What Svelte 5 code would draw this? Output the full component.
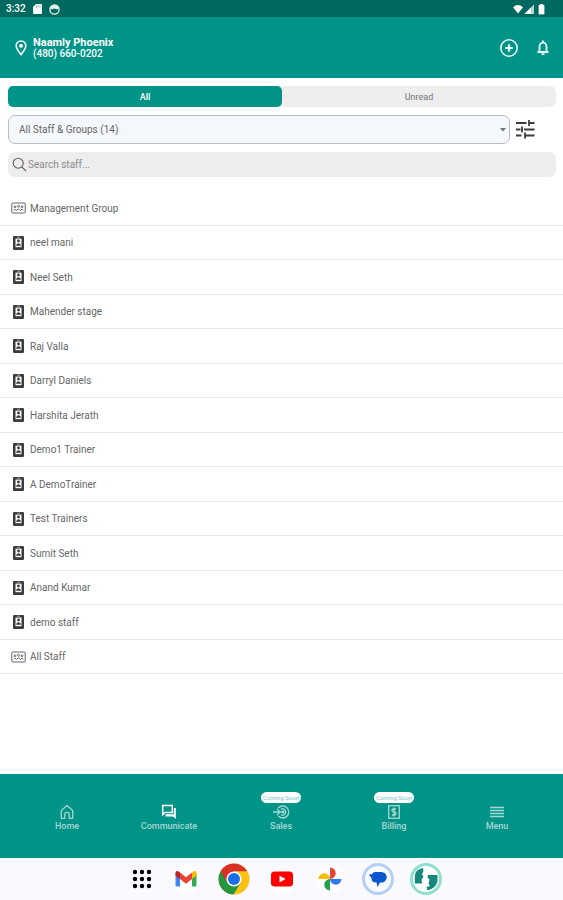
<script>
  const rows = [
    { name: 'Management Group', group: true },
    { name: 'neel mani' },
    { name: 'Neel Seth' },
    { name: 'Mahender stage' },
    { name: 'Raj Valla' },
    { name: 'Darryl Daniels' },
    { name: 'Harshita Jerath' },
    { name: 'Demo1 Trainer' },
    { name: 'A DemoTrainer' },
    { name: 'Test Trainers' },
    { name: 'Sumit Seth' },
    { name: 'Anand Kumar' },
    { name: 'demo staff' },
    { name: 'All Staff', group: true }
  ];
  const nav = [
    { label: 'Home', icon: 'home' },
    { label: 'Communicate', icon: 'chat', active: true },
    { label: 'Sales', icon: 'sales', soon: true },
    { label: 'Billing', icon: 'billing', soon: true },
    { label: 'Menu', icon: 'menu' }
  ];
  let tab = $state('all');
  let query = $state('');
  let shown = $derived(rows.filter((r) => r.name.toLowerCase().includes(query.toLowerCase())));
</script>

<div class="app">
  <div class="status">
    <span class="time">3:32</span>
    <svg width="9" height="10" viewBox="0 0 9 10"><path d="M3 0H8Q9 0 9 1V9Q9 10 8 10H1Q0 10 0 9V3Z" fill="#fff" /><path d="M3.5 1.5v2M5.3 1.5v2M7.1 1.5v2" stroke="#4d938c" stroke-width=".7" /></svg>
    <svg width="11" height="11" viewBox="0 0 11 11"><circle cx="5.5" cy="5.5" r="4.600" fill="none" stroke="#e8f4f2" stroke-width="1.300" /><path d="M1 4.800Q1.500 1 5.500 1T10 4.800L7.800 5.500 6.800 4.800H4.200L3.200 5.500Z" fill="#e8f4f2" /></svg>
    <svg class="right" width="34" height="11" viewBox="0 0 34 11"><path d="M1 3.200Q6 -1 11 3.200L6 9.500Z" fill="#fff" /><path d="M22 .5V10H12.500Z" fill="#b5d3d0" /><path d="M19 3.500V10H12.500Z" fill="#fff" /><path d="M27 1.300h1.500V.3h2v1H32V10H27Z" fill="#fff" stroke="#fff" stroke-width=".8" stroke-linejoin="round" /></svg>
  </div>

  <header>
    <svg width="12" height="16" viewBox="0 0 12 16" fill="none" stroke="#fff"><path d="M6 14.600C3.600 11.600 1.200 8.800 1.200 5.800a4.800 4.800 0 0 1 9.600 0c0 3-2.400 5.800-4.800 8.800Z" stroke-width="1.600" /><circle cx="6" cy="5.800" r="1.500" fill="#fff" stroke-width="1" /></svg>
    <div class="place">
      <strong>Naamly Phoenix</strong>
      <span>(480) 660-0202</span>
    </div>
    <button class="plain" aria-label="Add">
      <svg width="20" height="20" viewBox="0 0 20 20" fill="none" stroke="#e9f7f5"><circle cx="10" cy="10" r="8.200" stroke-width="1.600" /><path d="M10 6.200v7.600M6.200 10h7.600" stroke-width="2.200" /></svg>
    </button>
    <button class="plain" aria-label="Notifications">
      <svg width="12" height="15" viewBox="0 0 12 15" fill="none" stroke="#e9f7f5"><path d="M.5 12h11M2.500 12V6.500a3.500 3.900 0 0 1 7 0V12" stroke-width="1.800" /><path d="M6 .5v2M4.500 14.200h3" stroke-width="1.700" /></svg>
    </button>
  </header>

  <main>
    <div class="tabs" role="tablist">
      <button role="tab" aria-selected={tab === 'all'} class:on={tab === 'all'} onclick={() => (tab = 'all')}>All</button>
      <button role="tab" aria-selected={tab === 'unread'} class:on={tab === 'unread'} onclick={() => (tab = 'unread')}>Unread</button>
    </div>
    <div class="filter">
      <div class="pick">
        <select aria-label="Staff and groups"><option>All Staff &amp; Groups (14)</option></select>
        <svg width="6" height="4" viewBox="0 0 6 4"><path d="M0 0h6L3 3.500Z" fill="#6d7276" /></svg>
      </div>
      <button class="plain" aria-label="Filters">
        <svg width="20" height="20" viewBox="0 0 20 20" stroke="#3c3c3c" stroke-width="1.800" fill="none"><path d="M1 3h10.500M14 3h5.500M14 0v6M1 9.500h4.500M9 9.500H19.500M7 6.500v6M1 15.500h5.500M10 15.500h9.500M10 12.500v6" /></svg>
      </button>
    </div>
    <label class="search">
      <svg width="15" height="15" viewBox="0 0 15 15" fill="none" stroke="#5e5e5e" stroke-width="1.100"><circle cx="6.200" cy="6.200" r="5" /><path d="M9.800 9.800L14 14" /></svg>
      <input type="text" placeholder="Search staff..." aria-label="Search staff" bind:value={query} />
    </label>
  </main>

  <ul>
    {#each shown as row}
      <li>
        {#if row.group}
          <svg width="15" height="12" viewBox="0 0 15 12" fill="none" stroke="#666"><rect x=".8" y="1" width="13.400" height="10" rx="1" stroke-width="1" /><circle cx="4" cy="4.800" r=".9" /><circle cx="7.500" cy="4.300" r="1" /><circle cx="11" cy="4.800" r=".9" /><path d="M2.500 8.300q1.500-2.300 3 0q2-3 4 0q1.500-2.300 3 0" stroke-width=".9" /></svg>
        {:else}
          <svg width="15" height="14" viewBox="0 0 15 14"><rect x="2" y="0" width="11" height="14" rx="1.200" fill="#3b3b3b" /><rect x="4.500" y="2.600" width="6" height="8.600" fill="#fff" /><path d="M6 1.200h3" stroke="#bbb" stroke-width=".8" /><circle cx="7.500" cy="5" r="1.400" fill="#3b3b3b" /><path d="M5 9.800Q5.200 7.200 7.500 7.200T10 9.800Z" fill="#3b3b3b" /></svg>
        {/if}
        <span>{row.name}</span>
      </li>
    {/each}
  </ul>

  <nav>
    {#each nav as item}
      <a href="#{item.icon}" class:active={item.active}>
        {#if item.soon}<span class="soon">Coming Soon</span>{/if}
        {#if item.icon === 'home'}
          <svg width="16" height="16" viewBox="0 0 16 16" fill="none" stroke="currentColor" stroke-width="1.300"><path d="M2.300 6.500L8 1.500l5.700 5V14.300H10.200V10Q10.200 8.300 8 8.300T5.800 10v4.300H2.300Z" stroke-linejoin="round" /></svg>
        {:else if item.icon === 'chat'}
          <svg width="16" height="16" viewBox="0 0 16 16" fill="none" stroke="currentColor" stroke-width="1.500"><path d="M1.700 1.500h9.600v7H4L1.700 10.700Z" /><path d="M12.800 4h2v11L12.200 12.500H4.500v-2.200H12.800Z" fill="currentColor" stroke="none" /></svg>
        {:else if item.icon === 'sales'}
          <svg width="18" height="16" viewBox="0 0 18 16" fill="none" stroke="currentColor" stroke-width="1.300"><path d="M6.300 4A6 6 0 1 1 6.300 12" /><path d="M9 5.200A3.200 3.200 0 1 1 9 10.800" /><path d="M1 8h10M5 5l3 3-3 3" /><circle cx="11.200" cy="8" r=".8" fill="currentColor" /></svg>
        {:else if item.icon === 'billing'}
          <svg width="16" height="16" viewBox="0 0 16 16" fill="none" stroke="currentColor" stroke-width="1.300"><rect x="2.700" y="1.700" width="10.600" height="12.600" /><path d="M10 5H7.500Q6 5 6 6.400T7.500 7.800h1Q10 7.800 10 9.400T8.500 11H6M8 3.500V12.500" /></svg>
        {:else}
          <svg width="16" height="16" viewBox="0 0 16 16" stroke="currentColor" stroke-width="1.400"><path d="M1 3.500h14M1 6.500h14M1 9.500h14M1 12.500h14" /></svg>
        {/if}
        <span>{item.label}</span>
      </a>
    {/each}
  </nav>

  <footer>
    <button class="plain apps" aria-label="All apps">
      <svg width="20" height="20" viewBox="0 0 20 20">
        {#each [3, 10, 17] as y}{#each [3, 10, 17] as x}<circle cx={x} cy={y} r="2.200" />{/each}{/each}
      </svg>
    </button>
    <button class="plain" aria-label="Gmail">
      <svg width="32" height="32" viewBox="0 0 32 32"><circle cx="16" cy="16" r="14" fill="#fff" /><path d="M5.500 10v12.300q0 1.200 1.300 1.200H10V13.500Z" fill="#4285f4" /><path d="M26.500 10v12.300q0 1.200-1.300 1.200H22V13.500Z" fill="#34a853" /><path d="M22 9.500l1.800-1.200q2.700-.8 2.700 1.700v2.500L22 16Z" fill="#fbbc04" /><path d="M10 9.500L8.200 8.300Q5.500 7.500 5.500 10v2.500L10 16Z" fill="#c5221f" /><path d="M10 9.500l6 4.700 6-4.700V16l-6 4.700L10 16Z" fill="#ea4335" /></svg>
    </button>
    <button class="plain" aria-label="Chrome">
      <svg width="32" height="32" viewBox="0 0 32 32"><circle cx="16" cy="16" r="15.500" fill="#fbc116" /><path d="M16 16L2.600 8.200A15.500 15.500 0 0 0 15.500 31.500L22.500 20Z" fill="#23963f" /><path d="M2.600 8.200A15.500 15.500 0 0 1 29.400 8.300H16L9.300 20Z" fill="#d93025" /><circle cx="16" cy="16" r="7.600" fill="#fff" /><circle cx="16" cy="16" r="6" fill="#1a6fe8" /></svg>
    </button>
    <button class="plain" aria-label="YouTube">
      <svg width="32" height="32" viewBox="0 0 32 32"><circle cx="16" cy="16" r="14" fill="#fff" /><rect x="5" y="8.500" width="22" height="15" rx="3.500" fill="#f00" /><path d="M13.500 12.500L19.500 16l-6 3.500Z" fill="#fff" /></svg>
    </button>
    <button class="plain" aria-label="Photos">
      <svg width="32" height="32" viewBox="0 0 32 32"><circle cx="16" cy="16" r="14" fill="#fff" /><path d="M16 16V4.500a5.700 5.700 0 0 1 0 11.500Z" fill="#ea4335" /><path d="M16 16h11.500a5.700 5.700 0 0 1-11.500 0Z" fill="#2f7cf0" /><path d="M16 16v11.500a5.700 5.700 0 0 1 0-11.500Z" fill="#27a04a" /><path d="M16 16H4.500a5.700 5.700 0 0 1 11.500 0Z" fill="#fbbc04" /></svg>
    </button>
    <button class="plain" aria-label="Messages">
      <svg width="32" height="32" viewBox="0 0 32 32"><circle cx="16" cy="16" r="14.500" fill="#f7faff" stroke="#b5cef5" stroke-width="3" /><path d="M13 9h6.500a5 5 0 0 1 0 10.500H18L15.500 24 14.500 19.500H14Q9.500 19.500 9.500 15L7.300 12.200Q7 11.200 8.200 11.200H10Q11 9 13 9Z" fill="#0b57d0" /></svg>
    </button>
    <button class="plain" aria-label="Naamly">
      <svg width="32" height="32" viewBox="0 0 32 32"><circle cx="16" cy="16" r="14.500" fill="#fff" stroke="#8edfcb" stroke-width="3" /><path d="M13 5Q5 6.500 4.800 13V20.500H12L11.500 16.500 13.500 14 12 11 13.500 8Z" fill="#17897c" /><path d="M18 12H27.500V18Q26.500 25 17.500 27.500L16.500 24 20 23 18.500 21 19.500 16.500 17.500 14.500Z" fill="#17897c" /></svg>
    </button>
  </footer>
</div>

<style>
  :global(body) { margin: 0; background: #fff; }
  .app {
    display: flex;
    flex-direction: column;
    min-height: 100vh;
    font-family: Roboto, "Liberation Sans", sans-serif;
    font-size: 10px;
    color: #666;
  }
  svg { display: block; flex: none; }
  button, input, select { font: inherit; color: inherit; border: 0; margin: 0; padding: 0; }
  .plain { background: none; display: flex; align-items: center; justify-content: center; cursor: pointer; }

  .status {
    display: flex;
    align-items: center;
    gap: 7px;
    height: 17px;
    padding: 1px 17px 0 6px;
    box-sizing: border-box;
    background: #00695f;
    color: #fff;
  }
  .time { font-weight: 500; line-height: 16px; }
  .right { margin-left: auto; }

  header {
    display: flex;
    align-items: center;
    gap: 6px;
    height: 61px;
    padding: 0 14px 0 15px;
    background: #009489;
    color: #fff;
  }
  .place { display: flex; flex-direction: column; flex: 1; line-height: 11px; font-weight: 500; }
  .place strong { font-size: 11px; font-weight: 700; }
  header .plain + .plain { margin-left: 12px; }

  main { display: flex; flex-direction: column; gap: 8px; padding: 8px 7px 14px 8px; }
  .tabs { display: flex; background: #eee; border-radius: 6px; }
  .tabs button {
    flex: 1;
    height: 21px;
    border-radius: 5px;
    background: none;
    font-size: 9px;
    color: #777;
    cursor: pointer;
  }
  .tabs .on { background: #009489; color: #fff; font-weight: 500; }
  .filter { display: flex; align-items: center; gap: 5px; padding-right: 21px; }
  .pick { position: relative; flex: 1; }
  .pick select {
    display: block;
    appearance: none;
    box-sizing: border-box;
    width: 100%;
    height: 29px;
    padding: 0 10px;
    border: 1px solid #b9bdc3;
    border-radius: 7px;
    background: #f4f7fb;
  }
  .pick svg { position: absolute; right: 4px; top: 13px; pointer-events: none; }
  .search {
    display: flex;
    align-items: center;
    gap: 1px;
    height: 25px;
    padding: 0 4px;
    border-radius: 7px;
    background: #ededed;
  }
  .search input { flex: 1; min-width: 0; background: none; outline: 0; }
  .search input::placeholder { color: #8c8c8c; opacity: 1; }

  ul { flex: 1; margin: 0; padding: 0 0 16px; list-style: none; }
  li {
    display: flex;
    align-items: center;
    gap: 4px;
    height: 34px;
    padding: 0 11px;
    border-bottom: 1px solid #e8e8e8;
  }
  li:nth-child(even) { height: 33px; }

  nav {
    display: grid;
    grid-template-columns: 102fr 102fr 122fr 104fr 102fr;
    align-items: center;
    height: 84px;
    padding: 0 15px 0 16px;
    background: #009489;
  }
  nav a {
    position: relative;
    display: flex;
    flex-direction: column;
    align-items: center;
    padding-top: 4px;
    font-size: 9px;
    line-height: 12px;
    font-weight: 500;
    color: #a9d6d1;
    text-decoration: none;
  }
  nav .active svg { color: #fff; }
  .soon {
    position: absolute;
    bottom: 100%;
    margin-bottom: -3px;
    padding: 0 2px;
    border-radius: 6px;
    background: #fff;
    color: #7cc4bd;
    font-size: 6px;
    line-height: 11px;
    font-weight: 400;
    white-space: nowrap;
  }

  footer {
    display: flex;
    align-items: center;
    justify-content: center;
    gap: 8px;
    height: 42px;
    padding-left: 9px;
    background: #f9f9ff;
  }
  footer .plain { width: 40px; }
  footer .apps { width: 32px; }
</style>
